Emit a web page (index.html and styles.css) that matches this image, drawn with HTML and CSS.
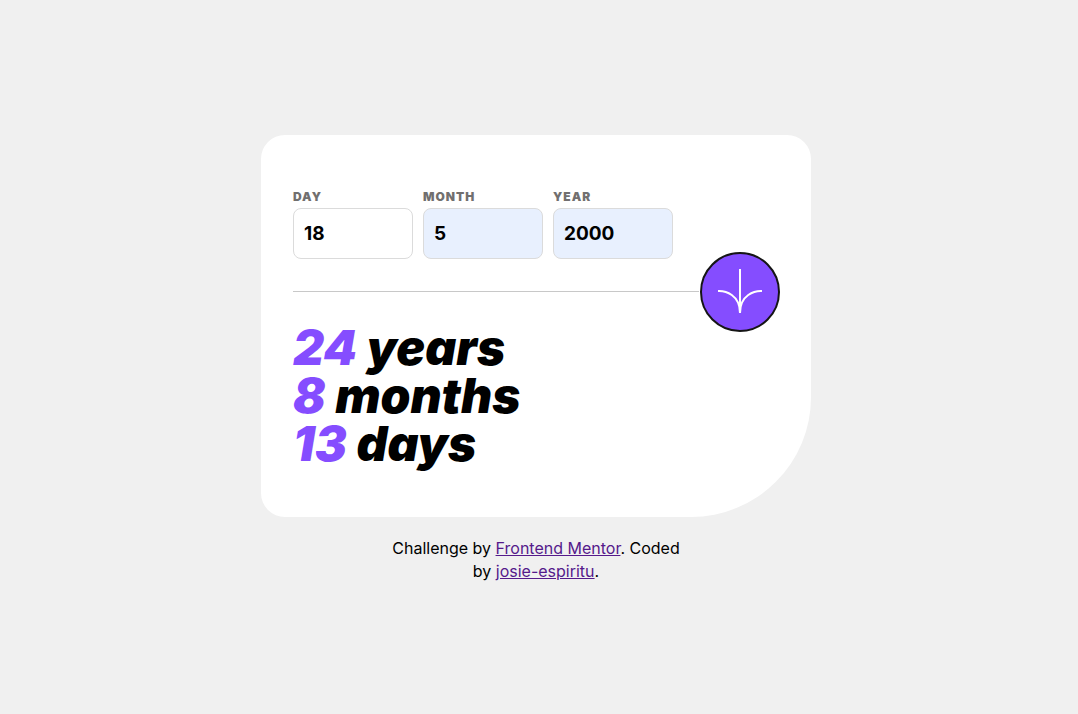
FILE: index.html
```html
<!DOCTYPE html>
<html lang="en">
<head>
  <meta charset="utf-8">
  <meta name="viewport" content="width=device-width, initial-scale=1">
  <title>Age calculator</title>
  <link rel="stylesheet" href="styles.css">
</head>
<body>
  <main class="card">
    <form class="form">
      <div class="fields">
        <div class="field">
          <label class="label" for="day">DAY</label>
          <input class="input" id="day" type="text" inputmode="numeric" value="18">
        </div>
        <div class="field">
          <label class="label" for="month">MONTH</label>
          <input class="input filled" id="month" type="text" inputmode="numeric" value="5">
        </div>
        <div class="field">
          <label class="label" for="year">YEAR</label>
          <input class="input filled" id="year" type="text" inputmode="numeric" value="2000">
        </div>
      </div>
      <div class="divider">
        <span class="line"></span>
        <button class="submit" type="button" aria-label="Calculate age">
          <svg width="46" height="44" viewBox="0 0 46 44" fill="none" stroke="#fff" stroke-width="2" aria-hidden="true">
            <path d="M1 22.019C8.333 21.686 23 25.616 23 44M23 44V0M45 22.019C37.667 21.686 23 25.616 23 44"/>
          </svg>
        </button>
      </div>
    </form>
    <div class="results">
      <p class="result"><span class="number">24</span> years</p>
      <p class="result"><span class="number">8</span> months</p>
      <p class="result"><span class="number">13</span> days</p>
    </div>
  </main>
  <footer class="attribution">
    Challenge by <a class="link" href="#mentor">Frontend Mentor</a>. Coded by <a class="link" href="#author">josie-espiritu</a>.
  </footer>
</body>
</html>
```
FILE: styles.css
```css
* {
  box-sizing: border-box;
}

body {
  margin: 0;
  min-height: 100vh;
  padding: 4px 6px 0 0;
  display: flex;
  flex-direction: column;
  align-items: center;
  justify-content: center;
  gap: 20px;
  background: #f0f0f0;
  color: #000;
  font-family: Inter, "Open Sans", sans-serif;
}

.card {
  width: 100%;
  max-width: 550px;
  padding: 53px 31px 49px 32px;
  background: #fff;
  border-radius: 24px 24px 120px 24px;
}

.fields {
  display: flex;
  gap: 10px;
}

.field {
  display: flex;
  flex-direction: column;
  width: 120px;
}

.label {
  padding-bottom: 2px;
  color: #716f6f;
  font-size: 12px;
  font-weight: 900;
  line-height: 18px;
  letter-spacing: 1px;
}

.input {
  width: 100%;
  height: 51px;
  padding: 0 10px;
  border: 1px solid #dbdbdb;
  border-radius: 8px;
  background: #fff;
  color: #000;
  font: 700 19px/24px Inter, "Open Sans", sans-serif;
}

.filled {
  background: #e8f0fe;
}

.divider {
  display: flex;
  align-items: center;
  gap: 1px;
  margin-top: -7px;
}

.line {
  flex: 1;
  height: 2px;
  border-top: 1px solid #c8c8c8;
}

.submit {
  display: flex;
  align-items: center;
  justify-content: center;
  width: 80px;
  height: 80px;
  padding: 0 0 3px;
  border: 2px solid #151515;
  border-radius: 50%;
  background: #854dff;
  cursor: pointer;
}

.results {
  margin-top: -8px;
}

.result {
  margin: 0;
  font-size: 48px;
  font-style: italic;
  font-weight: 900;
  line-height: 48px;
}

.number {
  color: #854dff;
}

.attribution {
  max-width: 300px;
  font-size: 16px;
  line-height: 23px;
  text-align: center;
}

.link {
  color: #551a8b;
}
```
